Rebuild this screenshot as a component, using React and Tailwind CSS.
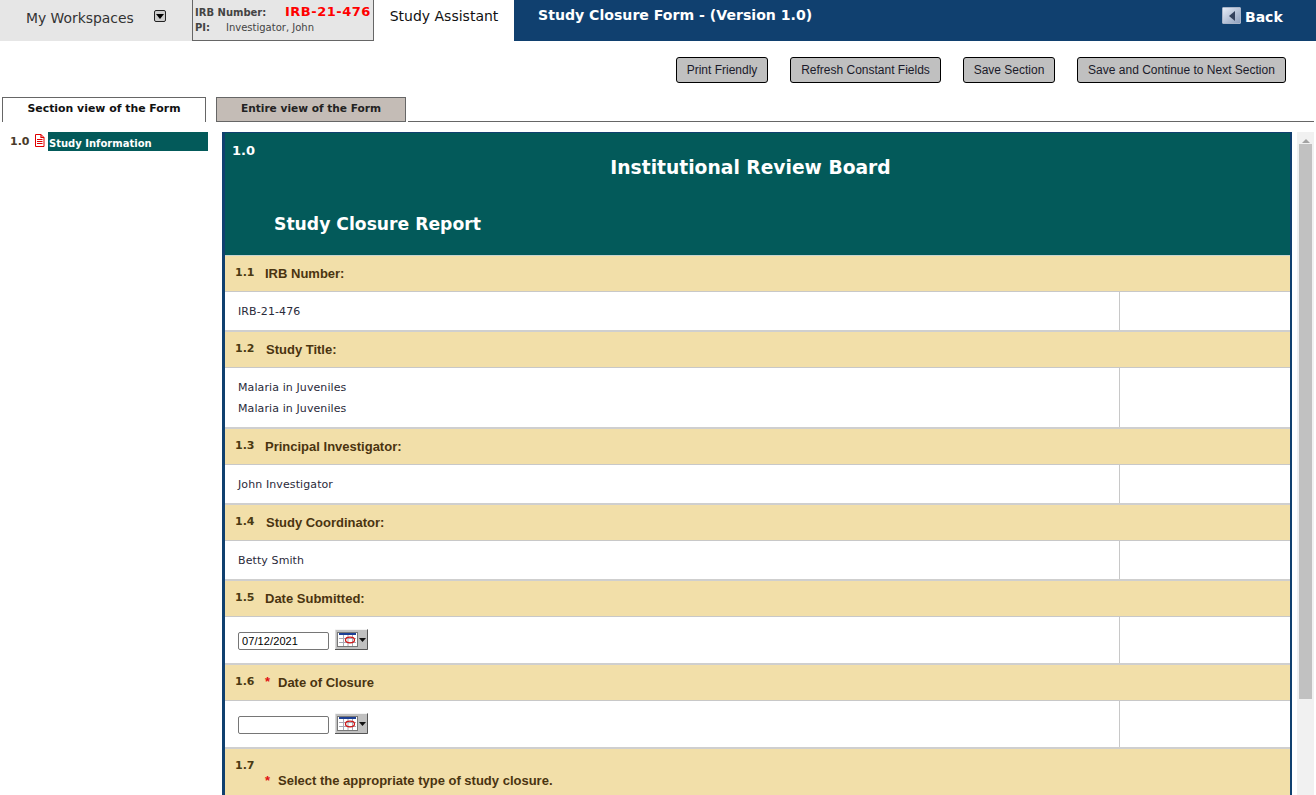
import React from 'react';

const VERDANA = 'font-["DejaVu_Sans",sans-serif]';
const ARIAL = 'font-["Liberation_Sans",Arial,sans-serif]';

const BUTTONS = [
  { label: 'Print Friendly', width: 'w-[92px]', gap: 'mr-[22px]' },
  { label: 'Refresh Constant Fields', width: 'w-[151px]', gap: 'mr-[22px]' },
  { label: 'Save Section', width: 'w-[92px]', gap: 'mr-[22px]' },
  { label: 'Save and Continue to Next Section', width: 'w-[209px]', gap: '' }
];

const CalendarButton = () => (
  <svg width="33" height="21" viewBox="0 0 33 21" className="ml-[6px] -mt-[3px] shrink-0">
    <rect x="0" y="0" width="33" height="21" fill="#c0c0c0" />
    <path d="M0 20.5V0.5H32.5" stroke="#f4f4f4" fill="none" />
    <path d="M0 20.5H32.5V0.5" stroke="#555" fill="none" />
    <rect x="2.5" y="3.5" width="20" height="14" fill="#fff" stroke="#777" />
    <rect x="4" y="4" width="17" height="2" fill="#1c3f94" />
    <path d="M4 9.5H21M4 13.5H21M8.5 6V17M13 6V17M17.5 6V17" stroke="#a9a9b5" />
    <ellipse cx="15" cy="11" rx="4.5" ry="2.8" fill="none" stroke="#d01818" strokeWidth="1.3" />
    <path d="M24 9H31L27.5 13Z" fill="#111" />
  </svg>
);

const DocIcon = () => (
  <svg width="11" height="13" viewBox="0 0 11 13" className="shrink-0 mt-[2px]">
    <path d="M1.5 .5H7L10 3.5V12.5H1.5Z" fill="#fff" stroke="#e00000" />
    <path d="M7 .5V3.5H10M3 5.5H8.5M3 7.5H8.5M3 9.5H8.5" fill="none" stroke="#e00000" strokeWidth="1.2" />
  </svg>
);

const QuestionHead = ({ num, required, label, labelClass = '' }) => (
  <div className="h-[35px] bg-[#f2dfa9] flex items-center pl-[10px] shrink-0">
    <span className={`${VERDANA} text-[11px] font-bold text-[#4a3a12] w-[30px] -mt-[1px]`}>{num}</span>
    {required && <span className={`${ARIAL} text-[13px] font-bold text-[#e01010] w-[13px] -mt-[1px]`}>*</span>}
    <span className={`${ARIAL} text-[13px] font-bold text-[#4a3410] ${labelClass}`}>{label}</span>
  </div>
);

const AnswerRow = ({ height, children }) => (
  <div className={`${height} bg-white flex border-t border-[#c8c8c8] border-b-2 border-b-[#cfcfcf] shrink-0`}>
    <div className="w-[895px] border-r border-[#c8c8c8] pl-[13px] pt-[2px] flex flex-col justify-center text-[11px] tracking-[0.1px] text-[#2a2a3a]">
      {children}
    </div>
    <div className="flex-1" />
  </div>
);

const DateField = ({ value }) => (
  <div className="flex items-center">
    <input
      readOnly
      value={value}
      className={`${ARIAL} w-[91px] h-[18px] border border-[#767676] rounded-[2px] px-[3px] text-[11px] text-black bg-white outline-none`}
    />
    <CalendarButton />
  </div>
);

export default function App() {
  return (
    <div className={`${VERDANA} w-[1316px] h-[795px] overflow-hidden bg-white relative`}>
      {/* top bar */}
      <div className="flex h-[41px]">
        <div className="w-[192px] bg-[#e6e6e6] flex items-center pl-[26px] text-[#333] text-[13.9px] relative">
          <span className="-mt-[4px]">My Workspaces</span>
          <span className="absolute left-[154px] top-[10px] w-[12px] h-[12px] rounded-[2px] border border-[#222] bg-[#ccc] flex items-center justify-center">
            <span className="w-0 h-0 border-x-[4px] border-x-transparent border-t-[5px] border-t-black" />
          </span>
        </div>
        <div className="w-[182px] bg-[#e6e6e6] border-x border-b border-[#666] pl-[2px] relative">
          <div className="flex items-start h-[20px]">
            <span className="text-[10px] font-bold text-[#444] mt-[5px] w-[90px]">IRB Number:</span>
            <span className="text-[13px] font-bold text-[#ff0000] mt-[2px] tracking-[0.5px]">IRB-21-476</span>
          </div>
          <div className="flex items-center">
            <span className="text-[10px] font-bold text-[#444] w-[31px]">PI:</span>
            <span className="text-[10px] text-[#444]">Investigator, John</span>
          </div>
        </div>
        <div className="w-[140px] bg-white flex items-center justify-center text-[14px] text-[#111] -mt-[8px]">
          Study Assistant
        </div>
        <div className="flex-1 bg-[#10406f] flex items-center pl-[24px] relative">
          <span className="text-white font-bold text-[14.1px] -mt-[9px]">Study Closure Form - (Version 1.0)</span>
          <span className="absolute left-[708px] top-[7px] w-[19px] h-[17px] rounded-[1px] bg-gradient-to-br from-[#e6ecf6] to-[#8fa0bd] border border-[#a8b4c8] flex items-center justify-center">
            <span className="w-0 h-0 border-y-[5px] border-y-transparent border-r-[6px] border-r-[#33415c]" />
          </span>
          <span className="absolute left-[731px] top-[7px] text-white font-bold text-[14px]">Back</span>
        </div>
      </div>

      {/* action buttons */}
      <div className="flex justify-end pr-[30px] pt-[16px] h-[56px]">
        {BUTTONS.map((btn) => (
          <button
            key={btn.label}
            className={`${ARIAL} ${btn.width} ${btn.gap} h-[26px] bg-[#c0c0c0] border border-black rounded-[3px] text-[12px] text-[#1a1a2a]`}
          >
            {btn.label}
          </button>
        ))}
      </div>

      {/* tabs */}
      <div className="flex h-[25px] items-end px-[2px] font-bold">
        <div className="w-[204px] h-[25px] pb-[2px] border-x border-t border-[#666] bg-white flex items-center justify-center text-[#111] text-[10.9px]">
          Section view of the Form
        </div>
        <div className="w-[10px]" />
        <div className="w-[190px] h-[25px] pb-[2px] border border-[#666] bg-[#c4bcb6] flex items-center justify-center text-[#222] text-[10.6px]">
          Entire view of the Form
        </div>
        <div className="flex-1 border-b border-[#666] ml-[2px]" />
      </div>

      {/* body */}
      <div className="flex pt-[10px]">
        <div className="w-[222px] shrink-0 flex items-start pl-[10px]">
          <span className="text-[11px] font-bold text-[#4a3a2a] w-[24px] mt-[2px]">1.0</span>
          <DocIcon />
          <div className="w-[160px] h-[19px] bg-[#035a5a] text-white text-[10px] font-bold flex items-center pl-[1px] pt-[3px] ml-[3px]">
            Study Information
          </div>
        </div>

        <div className="w-[1070px] shrink-0 flex flex-col border-l-[3px] border-r-[2px] border-[#10406f]">
          <div className="h-[124px] bg-[#035a5a] text-white border-t border-[#10406f] border-b border-b-[#c8d4cf] relative shrink-0">
            <div className="absolute left-[7px] top-[8px] text-[13px] font-bold">1.0</div>
            <div className="text-center pt-[21px] text-[18.7px] font-bold pr-[14px]">Institutional Review Board</div>
            <div className="pl-[49px] pt-[30px] text-[17.2px] font-bold">Study Closure Report</div>
          </div>

          <QuestionHead num="1.1" label="IRB Number:" />
          <AnswerRow height="h-[41px]">IRB-21-476</AnswerRow>

          <QuestionHead num="1.2" label="Study Title:" labelClass="ml-px" />
          <AnswerRow height="h-[62px]">
            <span className="leading-[21px] -mt-[2px]">Malaria in Juveniles</span>
            <span className="leading-[21px]">Malaria in Juveniles</span>
          </AnswerRow>

          <QuestionHead num="1.3" label="Principal Investigator:" />
          <AnswerRow height="h-[41px]">John Investigator</AnswerRow>

          <QuestionHead num="1.4" label="Study Coordinator:" labelClass="ml-px" />
          <AnswerRow height="h-[41px]">Betty Smith</AnswerRow>

          <QuestionHead num="1.5" label="Date Submitted:" />
          <AnswerRow height="h-[49px]">
            <DateField value="07/12/2021" />
          </AnswerRow>

          <QuestionHead num="1.6" required label="Date of Closure" />
          <AnswerRow height="h-[49px]">
            <DateField value="" />
          </AnswerRow>

          <div className="h-[60px] bg-[#f2dfa9] pl-[10px] pt-[9px] shrink-0">
            <div className="text-[11px] font-bold text-[#4a3a12]">1.7</div>
            <div className="flex items-center pl-[30px] -mt-[4px]">
              <span className={`${ARIAL} text-[13px] font-bold text-[#e01010] w-[13px]`}>*</span>
              <span className={`${ARIAL} text-[13px] font-bold text-[#4a3410]`}>Select the appropriate type of study closure.</span>
            </div>
          </div>
        </div>

        {/* scrollbar */}
        <div className="ml-[5px] w-[17px] h-[663px] bg-[#f1f1f1] flex flex-col items-center pt-[7px]">
          <span className="w-0 h-0 border-x-[4px] border-x-transparent border-b-[4px] border-b-[#a3a3a3]" />
          <div className="w-[13px] h-[555px] bg-[#c1c1c1] mt-[1px]" />
        </div>
      </div>
    </div>
  );
}
